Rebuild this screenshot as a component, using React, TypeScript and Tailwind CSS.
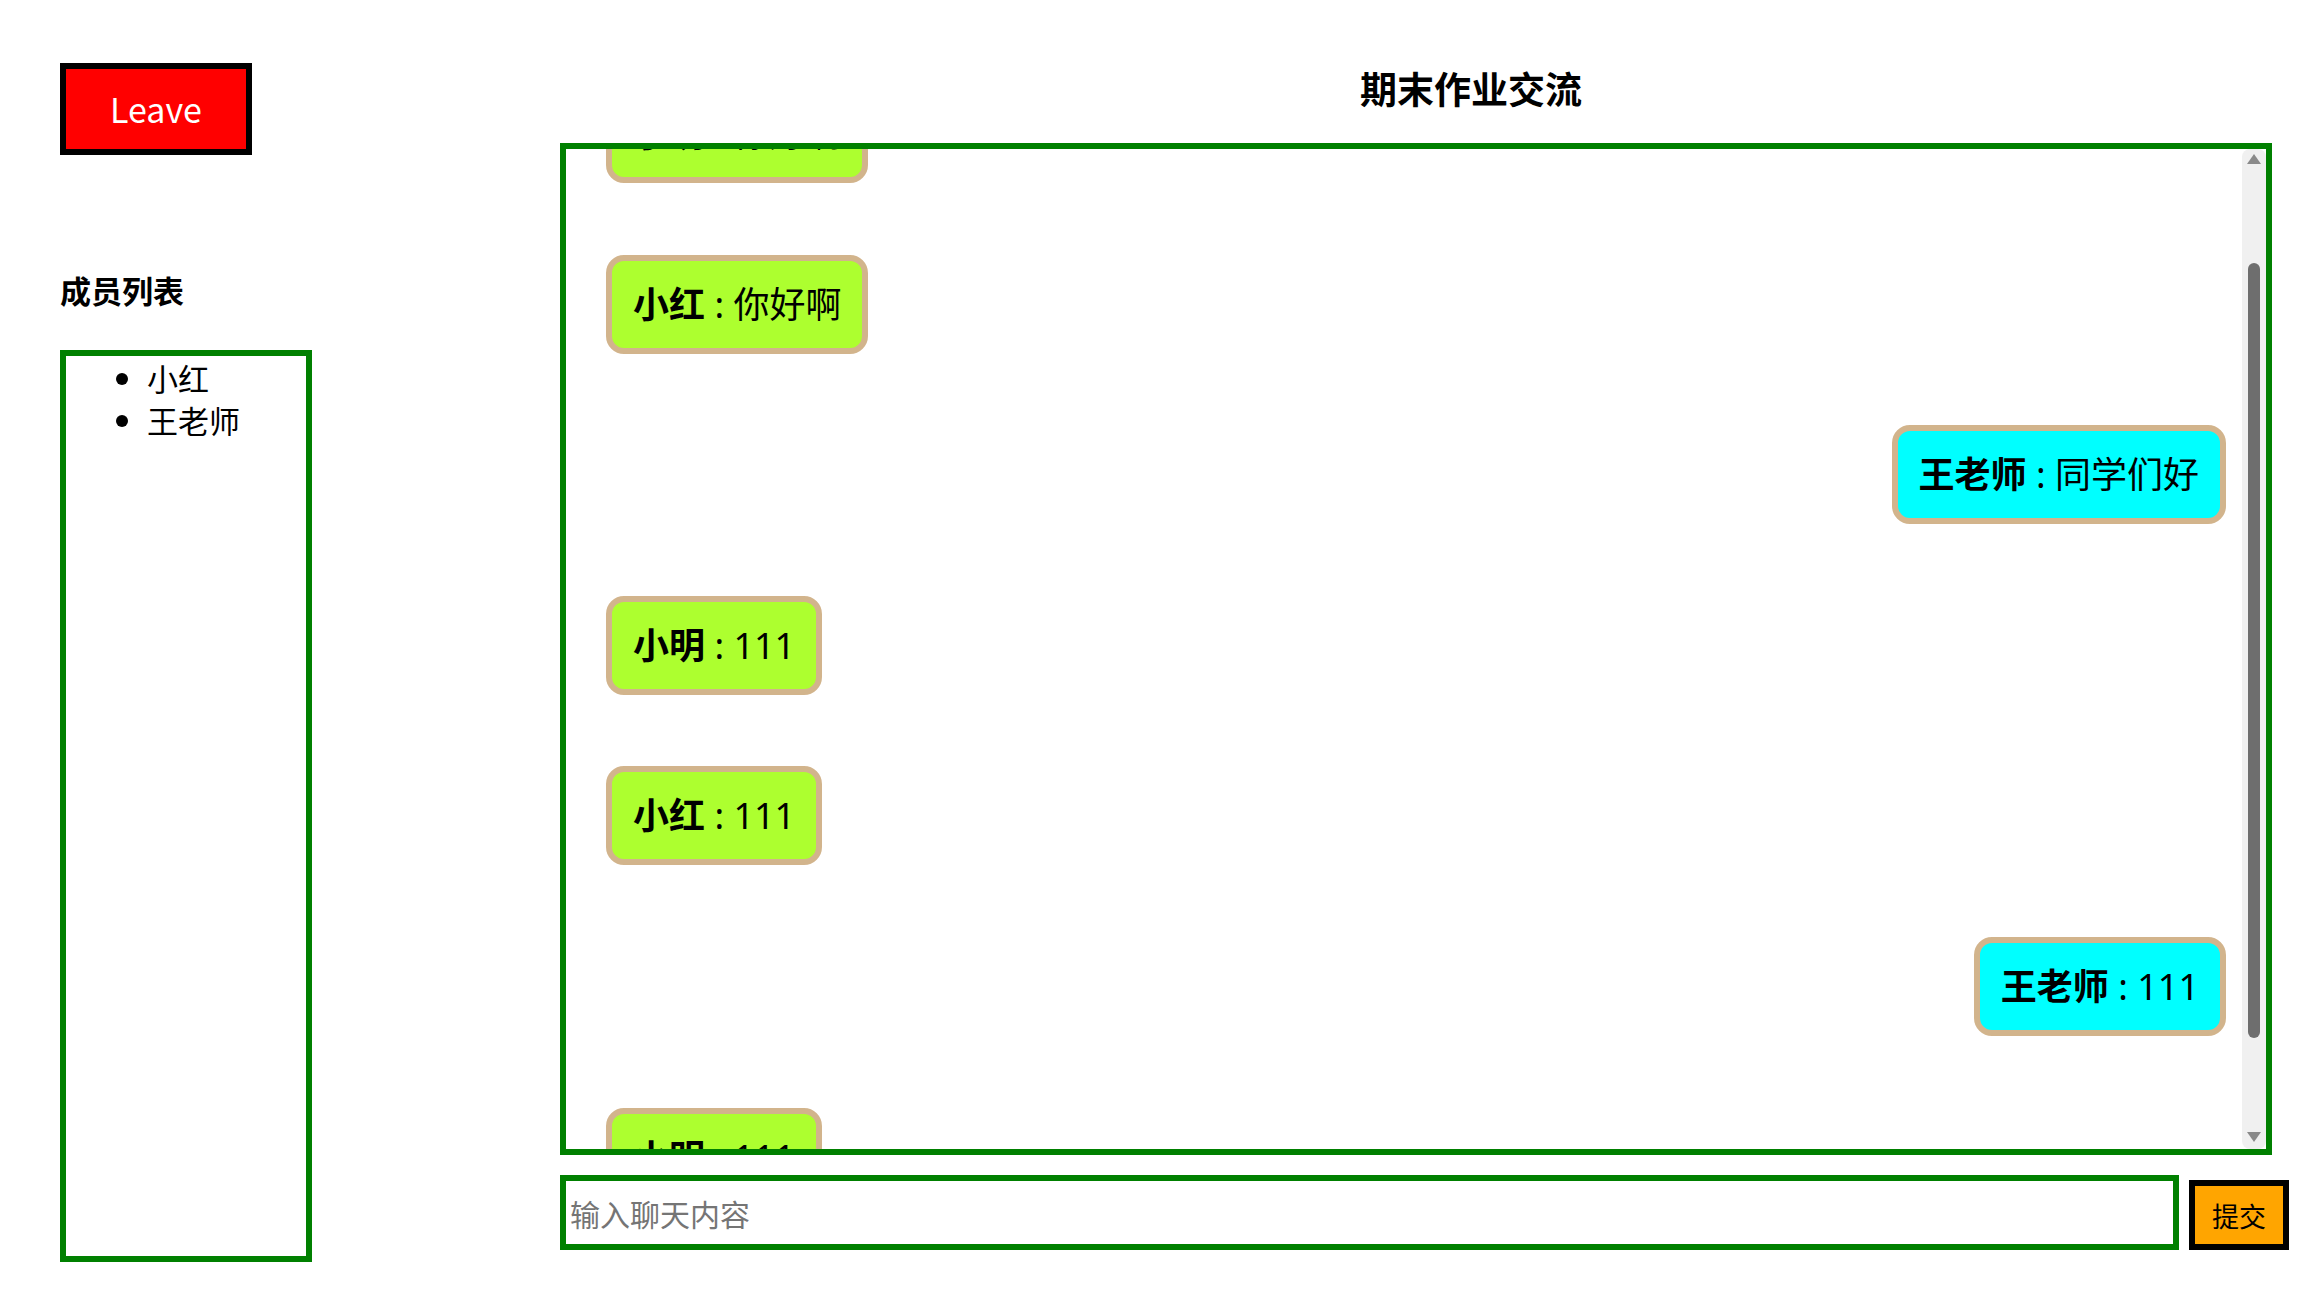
import React from "react";

interface IMessage {
  name: string;
  text: string;
  self: boolean;
}

const members = ["小红", "王老师"];

const messages: IMessage[] = [
  { name: "小明", text: "你好啊", self: false },
  { name: "小红", text: "你好啊", self: false },
  { name: "王老师", text: "同学们好", self: true },
  { name: "小明", text: "111", self: false },
  { name: "小红", text: "111", self: false },
  { name: "王老师", text: "111", self: true },
  { name: "小明", text: "111", self: false },
];

function Bubble({ data }: { data: IMessage }) {
  return (
    <div
      className={`whitespace-nowrap rounded-[18px] border-[6px] border-[#d2b48c] px-[21px] py-[20px] font-['Noto_Sans','Noto_Sans_CJK_SC',sans-serif] text-[36px] leading-[47px] text-black ${
        data.self ? "self-end bg-[#00ffff]" : "self-start bg-[#adff2f]"
      }`}
    >
      <span className="font-bold">{data.name}</span>
      <span> : {data.text}</span>
    </div>
  );
}

function ScrollBar() {
  return (
    <div className="flex w-[24px] flex-col items-center rounded-t-[8px] rounded-b-[8px] bg-[#f0f0f0]">
      <svg width="16" height="12" viewBox="0 0 16 12" className="mt-[4px]">
        <path d="M8 1 L15 11 L1 11 Z" fill="#8a8a8a" />
      </svg>
      <div className="mt-[98px] h-[775px] w-[12px] rounded-full bg-[#6e6e6e]" />
      <div className="flex-1" />
      <svg width="16" height="12" viewBox="0 0 16 12" className="mb-[6px]">
        <path d="M1 1 L15 1 L8 11 Z" fill="#8a8a8a" />
      </svg>
    </div>
  );
}

export default function App() {
  return (
    <div className="flex h-[1308px] w-full bg-white font-['Noto_Sans_CJK_SC','Noto_Sans',sans-serif] text-black">
      <div className="flex w-[560px] shrink-0 flex-col pl-[60px] pt-[63px]">
        <button className="h-[92px] w-[192px] border-[6px] border-black bg-[#ff0000] text-[34px] leading-none text-white">
          Leave
        </button>
        <h3 className="mt-[115px] text-[31px] font-bold leading-[40px]">
          成员列表
        </h3>
        <div className="mt-[40px] h-[912px] w-[252px] border-[6px] border-[#008000]">
          <ul className="list-disc pl-[81px] pt-[1px] text-[31px] leading-[42px]">
            {members.map((m) => (
              <li key={m}>{m}</li>
            ))}
          </ul>
        </div>
      </div>

      <div className="flex flex-col">
        <h2 className="pl-[800px] pt-[66px] text-[37px] font-bold leading-[45px]">
          期末作业交流
        </h2>
        <div className="mt-[32px] flex h-[1012px] w-[1712px] border-[6px] border-[#008000]">
          <div className="flex-1 overflow-hidden">
            <div className="mt-[-65px] flex flex-col gap-[71.6px] pl-[40px] pr-[16px]">
              {messages.map((msg, i) => (
                <Bubble key={i} data={msg} />
              ))}
            </div>
          </div>
          <ScrollBar />
        </div>
        <div className="mt-[20px] flex items-end gap-[10px]">
          <input
            className="h-[75px] w-[1619px] border-[6px] border-[#008000] pl-[4px] text-[30px] outline-none placeholder:text-[#757575]"
            placeholder="输入聊天内容"
          />
          <button className="h-[70px] w-[100px] border-[6px] border-black bg-[#ffa500] text-[27px] leading-none">
            提交
          </button>
        </div>
      </div>
    </div>
  );
}
